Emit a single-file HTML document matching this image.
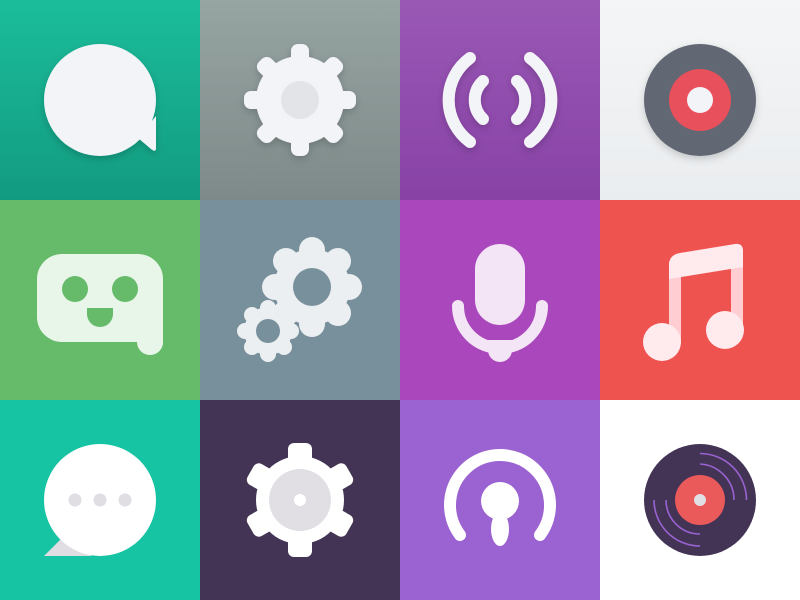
<!DOCTYPE html>
<html><head><meta charset="utf-8"><style>
html,body{margin:0;padding:0;width:800px;height:600px;overflow:hidden;background:#fff}
svg{display:block}
</style></head><body>
<svg width="800" height="600" viewBox="0 0 800 600" xmlns="http://www.w3.org/2000/svg">
<defs>
<linearGradient id="g1" x1="0" y1="0" x2="0" y2="1"><stop offset="0" stop-color="#1bbd9b"/><stop offset="1" stop-color="#129b80"/></linearGradient>
<linearGradient id="g2" x1="0" y1="0" x2="0" y2="1"><stop offset="0" stop-color="#96a4a2"/><stop offset="1" stop-color="#7e8a89"/></linearGradient>
<linearGradient id="g3" x1="0" y1="0" x2="0" y2="1"><stop offset="0" stop-color="#9a58b5"/><stop offset="1" stop-color="#8842a6"/></linearGradient>
<linearGradient id="g4" x1="0" y1="0" x2="0" y2="1"><stop offset="0" stop-color="#f4f5f7"/><stop offset="1" stop-color="#eaedef"/></linearGradient>
<filter id="sh" x="-30%" y="-30%" width="160%" height="160%"><feDropShadow dx="0" dy="3" stdDeviation="4" flood-color="#000" flood-opacity="0.18"/></filter>
</defs>
<!-- Row 1 -->
<rect x="0" y="0" width="200" height="200" fill="url(#g1)"/>
<g filter="url(#sh)" fill="#f3f4f8">
<circle cx="100" cy="100" r="56"/>
<path d="M138 138 L156 116 L156 148 Q156 153 151 149 Z"/>
</g>
<rect x="200" y="0" width="200" height="200" fill="url(#g2)"/>
<g filter="url(#sh)" fill="#f3f4f7">
<g transform="translate(300,100)">
<rect x="-9" y="-56" width="18" height="30" rx="7"/>
<rect x="-9" y="-56" width="18" height="30" rx="7" transform="rotate(45)"/>
<rect x="-9" y="-56" width="18" height="30" rx="7" transform="rotate(90)"/>
<rect x="-9" y="-56" width="18" height="30" rx="7" transform="rotate(135)"/>
<rect x="-9" y="-56" width="18" height="30" rx="7" transform="rotate(180)"/>
<rect x="-9" y="-56" width="18" height="30" rx="7" transform="rotate(225)"/>
<rect x="-9" y="-56" width="18" height="30" rx="7" transform="rotate(270)"/>
<rect x="-9" y="-56" width="18" height="30" rx="7" transform="rotate(315)"/>
<circle r="44"/>
</g>
</g>
<circle cx="300" cy="100" r="19" fill="#e3e4e8"/>
<rect x="400" y="0" width="200" height="200" fill="url(#g3)"/>
<g filter="url(#sh)" fill="none" stroke="#f3f4f8" stroke-width="12" stroke-linecap="round">
<path d="M470 58 A52 52 0 0 0 470 142"/>
<path d="M530 58 A52 52 0 0 1 530 142"/>
<path d="M483 81 A26 26 0 0 0 483 119"/>
<path d="M517 81 A26 26 0 0 1 517 119"/>
</g>
<rect x="600" y="0" width="200" height="200" fill="url(#g4)"/>
<circle cx="700" cy="100" r="56" fill="#626873" filter="url(#sh)"/>
<circle cx="700" cy="100" r="31" fill="#e8505c"/>
<circle cx="700" cy="100" r="13" fill="#f3f4f7"/>
<!-- Row 2 -->
<rect x="0" y="200" width="200" height="200" fill="#66bb6a"/>
<path d="M62 254 H138 A25 25 0 0 1 163 279 V342 A12.5 12.5 0 0 1 137.5 342 L137 342 H62 A25 25 0 0 1 37 317 V279 A25 25 0 0 1 62 254 Z" fill="#e8f5e9"/>
<path d="M137 338 H163 V342 A13 13 0 0 1 137 342 Z" fill="#e8f5e9"/>
<circle cx="75" cy="289" r="13" fill="#66bb6a"/>
<circle cx="125" cy="289" r="13" fill="#66bb6a"/>
<path d="M87 308 H113 V314 A13 13 0 0 1 87 314 Z" fill="#66bb6a"/>
<rect x="200" y="200" width="200" height="200" fill="#78909c"/>
<g fill="#eceff1">
<g transform="translate(312,287)">
<circle r="38"/>
<circle cx="0" cy="-37" r="13"/><circle cx="26" cy="-26" r="13"/><circle cx="37" cy="0" r="13"/><circle cx="26" cy="26" r="13"/>
<circle cx="0" cy="37" r="13"/><circle cx="-26" cy="26" r="13"/><circle cx="-37" cy="0" r="13"/><circle cx="-26" cy="-26" r="13"/>
</g>
<g transform="translate(268,331)" stroke="#78909c" stroke-width="3">
<circle r="24" stroke="none"/>
</g>
<g transform="translate(268,331)">
<circle r="23"/>
<circle cx="0" cy="-23" r="8"/><circle cx="16" cy="-16" r="8"/><circle cx="23" cy="0" r="8"/><circle cx="16" cy="16" r="8"/>
<circle cx="0" cy="23" r="8"/><circle cx="-16" cy="16" r="8"/><circle cx="-23" cy="0" r="8"/><circle cx="-16" cy="-16" r="8"/>
</g>
</g>
<circle cx="312" cy="287" r="19" fill="#78909c"/>
<circle cx="268" cy="331" r="12" fill="#78909c"/>
<rect x="400" y="200" width="200" height="200" fill="#ab47bc"/>
<rect x="475" y="244" width="50" height="81" rx="25" fill="#f3e5f5"/>
<path d="M458 306 A42 42 0 0 0 542 306" fill="none" stroke="#f3e5f5" stroke-width="12" stroke-linecap="round"/>
<path d="M488 340 H512 V350 A12 12 0 0 1 488 350 Z" fill="#f3e5f5"/>
<rect x="600" y="200" width="200" height="200" fill="#ef5350"/>
<rect x="669" y="262" width="12" height="82" fill="#ffcdd2"/>
<rect x="731" y="250" width="12" height="82" fill="#ffcdd2"/>
<path d="M669 265 Q669 255 680 253 L735 244 Q743 243 743 251 V267 L669 279 Z" fill="#ffebee"/>
<circle cx="662" cy="342" r="19" fill="#ffebee"/>
<circle cx="725" cy="330" r="19" fill="#ffebee"/>
<!-- Row 3 -->
<rect x="0" y="400" width="200" height="200" fill="#16c4a3"/>
<path d="M44 556 L62 538 L92 556 Z" fill="#e0dde3"/>
<circle cx="100" cy="500" r="56" fill="#fff"/>
<circle cx="75" cy="500" r="6.5" fill="#e0dde3"/>
<circle cx="100" cy="500" r="6.5" fill="#e0dde3"/>
<circle cx="125" cy="500" r="6.5" fill="#e0dde3"/>
<rect x="200" y="400" width="200" height="200" fill="#433456"/>
<g fill="#fff" transform="translate(300,500)">
<rect x="-12" y="-57" width="24" height="30" rx="6"/>
<rect x="-12" y="-57" width="24" height="30" rx="6" transform="rotate(60)"/>
<rect x="-12" y="-57" width="24" height="30" rx="6" transform="rotate(120)"/>
<rect x="-12" y="-57" width="24" height="30" rx="6" transform="rotate(180)"/>
<rect x="-12" y="-57" width="24" height="30" rx="6" transform="rotate(240)"/>
<rect x="-12" y="-57" width="24" height="30" rx="6" transform="rotate(300)"/>
<circle r="44"/>
</g>
<circle cx="300" cy="500" r="31" fill="#e1dfe4"/>
<circle cx="300" cy="500" r="6" fill="#fff"/>
<rect x="400" y="400" width="200" height="200" fill="#9b62d1"/>
<path d="M460 535 A50 50 0 1 1 540 535" fill="none" stroke="#fff" stroke-width="12" stroke-linecap="round"/>
<circle cx="500" cy="501" r="19" fill="#fff"/>
<ellipse cx="500" cy="529" rx="9" ry="17" fill="#fff"/>
<rect x="600" y="400" width="200" height="200" fill="#fff"/>
<circle cx="700" cy="500" r="56" fill="#433456"/>
<g fill="none" stroke="#9b62d1" stroke-width="1.6">
<path d="M700 453.5 A46.5 46.5 0 0 1 746.5 500"/>
<path d="M700 464 A36 36 0 0 1 734 500"/>
<path d="M654 500 A46 46 0 0 0 700 546"/>
<path d="M666 500 A34 34 0 0 0 700 534"/>
</g>
<circle cx="700" cy="500" r="25" fill="#eb5a5a"/>
<circle cx="700" cy="500" r="6" fill="#e1dfe4"/>
</svg>
</body></html>
